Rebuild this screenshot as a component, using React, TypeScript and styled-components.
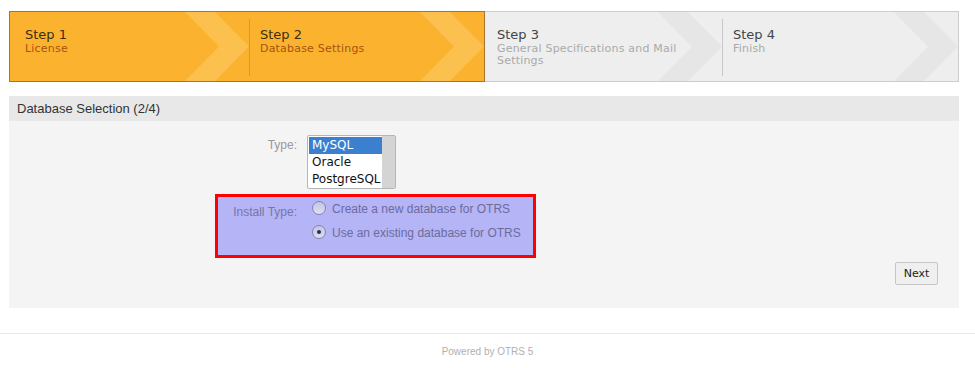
import React from 'react'
import styled, { createGlobalStyle } from 'styled-components'

const GlobalStyle = createGlobalStyle`
  html, body {
    margin: 0;
    padding: 0;
    background: #fff;
    font-family: "Liberation Sans", Arial, sans-serif;
  }
`

const steps = [
  { title: 'Step 1', sub: 'License', pad: 15 },
  { title: 'Step 2', sub: 'Database Settings', pad: 11 },
  { title: 'Step 3', sub: 'General Specifications and Mail Settings', pad: 12 },
  { title: 'Step 4', sub: 'Finish', pad: 11 },
]

function Chevron({ active }: { active: boolean }) {
  return (
    <ChevronSvg width="64" height="69" viewBox="0 0 64 69">
      <polygon
        points="0,0 30,0 64,34.5 30,69 0,69 34,34.5"
        fill={active ? '#fcc04f' : '#e6e6e6'}
      />
    </ChevronSvg>
  )
}

function Radio({ checked }: { checked?: boolean }) {
  return <RadioCircle>{checked && <RadioDot />}</RadioCircle>
}

export default function App() {
  return (
    <>
      <GlobalStyle />
      <Page>
        <Steps>
          <StepGroup $active>
            {steps.slice(0, 2).map((s, i) => (
              <Step key={s.title} $sep={i > 0} $pad={s.pad} $active>
                <Chevron active />
                <StepTitle $active>{s.title}</StepTitle>
                <StepSub $active>{s.sub}</StepSub>
              </Step>
            ))}
          </StepGroup>
          <StepGroup $active={false}>
            {steps.slice(2).map((s, i) => (
              <Step key={s.title} $sep={i > 0} $pad={s.pad} $active={false}>
                <Chevron active={false} />
                <StepTitle $active={false}>{s.title}</StepTitle>
                <StepSub $active={false}>{s.sub}</StepSub>
              </Step>
            ))}
          </StepGroup>
        </Steps>

        <WidgetBox>
          <WidgetHeader>Database Selection (2/4)</WidgetHeader>
          <WidgetBody>
            <FieldRow>
              <FieldLabel $width={288}>Type:</FieldLabel>
              <ListBox>
                <ListItems>
                  <ListItem $selected>MySQL</ListItem>
                  <ListItem>Oracle</ListItem>
                  <ListItem>PostgreSQL</ListItem>
                </ListItems>
                <ListTrack />
              </ListBox>
            </FieldRow>

            <Highlight>
              <FieldLabel $width={79} $tinted>
                Install Type:
              </FieldLabel>
              <RadioList>
                <RadioRow>
                  <Radio />
                  <RadioText>Create a new database for OTRS</RadioText>
                </RadioRow>
                <RadioRow>
                  <Radio checked />
                  <RadioText>Use an existing database for OTRS</RadioText>
                </RadioRow>
              </RadioList>
            </Highlight>

            <Actions>
              <NextButton>Next</NextButton>
            </Actions>
          </WidgetBody>
        </WidgetBox>
      </Page>
      <Footer>Powered by OTRS 5</Footer>
    </>
  )
}

const Page = styled.div`
  padding: 11px 16px 0 9px;
`

const Steps = styled.div`
  display: flex;
  height: 71px;
`

const StepGroup = styled.div<{ $active: boolean }>`
  display: flex;
  box-sizing: border-box;
  height: 71px;
  ${({ $active }) =>
    $active
      ? `
    flex: 0 0 476px;
    background: #fbb32f;
    border: 1px solid #a97430;
  `
      : `
    flex: 1;
    background: #eeeeee;
    border: 1px solid #cccccc;
    border-left: none;
  `}
`

const Step = styled.div<{ $sep: boolean; $pad: number; $active: boolean }>`
  position: relative;
  flex: 1;
  box-sizing: border-box;
  padding: 15px 40px 0 ${({ $pad }) => $pad}px;
  font-family: "DejaVu Sans", Verdana, sans-serif;

  ${({ $sep, $active }) =>
    $sep &&
    `
    &::before {
      content: '';
      position: absolute;
      left: 0;
      top: 7px;
      bottom: 5px;
      width: 1px;
      background: ${$active ? '#d29a32' : '#c8c8c8'};
    }
  `}
`

const ChevronSvg = styled.svg`
  position: absolute;
  right: 0;
  top: 0;
  display: block;
`

const StepTitle = styled.div<{ $active: boolean }>`
  position: relative;
  font-size: 13px;
  line-height: 16px;
  color: ${({ $active }) => ($active ? '#3b2e12' : '#444')};
`

const StepSub = styled.div<{ $active: boolean }>`
  position: relative;
  font-size: 11px;
  line-height: 12px;
  letter-spacing: 0.2px;
  color: ${({ $active }) => ($active ? '#a5530f' : '#aaaaaa')};
`

const WidgetBox = styled.div`
  margin-top: 14px;
  background: #f4f4f4;
`

const WidgetHeader = styled.div`
  height: 25px;
  line-height: 25px;
  padding-left: 8px;
  background: #e8e8e8;
  color: #333;
  font-size: 13px;
`

const WidgetBody = styled.div`
  padding: 14px 21px 23px 0;
`

const FieldRow = styled.div`
  display: flex;
  gap: 10px;
`

const FieldLabel = styled.div<{ $width: number; $tinted?: boolean }>`
  flex: 0 0 ${({ $width }) => $width}px;
  text-align: right;
  font-size: 12px;
  line-height: 14px;
  padding-top: ${({ $tinted }) => ($tinted ? 8 : 3)}px;
  color: ${({ $tinted }) => ($tinted ? '#7676a6' : '#999')};
`

const ListBox = styled.div`
  display: flex;
  box-sizing: border-box;
  width: 89px;
  height: 54px;
  border: 1px solid #b5b5b5;
  border-radius: 2px;
  background: #fff;
  overflow: hidden;
`

const ListItems = styled.div`
  flex: 1;
  padding: 1px 0 0 1px;
`

const ListItem = styled.div<{ $selected?: boolean }>`
  height: 17px;
  line-height: 17px;
  padding-left: 3px;
  font-family: "DejaVu Sans", Verdana, sans-serif;
  font-size: 12px;
  color: ${({ $selected }) => ($selected ? '#fff' : '#111')};
  background: ${({ $selected }) => ($selected ? '#3b80cf' : 'transparent')};
`

const ListTrack = styled.div`
  flex: 0 0 13px;
  background: #d4d4d4;
`

const Highlight = styled.div`
  display: flex;
  gap: 10px;
  box-sizing: border-box;
  width: 321px;
  margin: 5px 0 0 206px;
  padding: 0 0 10px 0;
  border: 3px solid #f00;
  background: #b4b4f6;
`

const RadioList = styled.div`
  display: flex;
  flex-direction: column;
`

const RadioRow = styled.div`
  display: flex;
  align-items: center;
  height: 24px;
  padding-left: 5px;
  gap: 6px;
`

const RadioCircle = styled.span`
  position: relative;
  box-sizing: border-box;
  width: 14px;
  height: 14px;
  margin-top: -3px;
  border: 1px solid #8585a6;
  border-radius: 50%;
  background: linear-gradient(#c4c4e6, #dedef6);
`

const RadioDot = styled.span`
  position: absolute;
  left: 4px;
  top: 4px;
  width: 4px;
  height: 4px;
  border-radius: 50%;
  background: #2c2c4c;
`

const RadioText = styled.span`
  font-size: 12px;
  color: #6c6c9c;
`

const Actions = styled.div`
  display: flex;
  justify-content: flex-end;
  margin-top: 4px;
`

const NextButton = styled.button`
  box-sizing: border-box;
  width: 43px;
  height: 23px;
  padding: 0;
  border: 1px solid #c6c6c6;
  border-radius: 2px;
  background: #efefef;
  color: #222;
  font-family: "DejaVu Sans", Verdana, sans-serif;
  font-size: 11px;
  font-weight: normal;
  cursor: pointer;
`

const Footer = styled.div`
  margin-top: 25px;
  border-top: 1px solid #e8e8e8;
  padding-top: 12px;
  text-align: center;
  font-size: 10px;
  line-height: 12px;
  color: #b0b0b0;
`
